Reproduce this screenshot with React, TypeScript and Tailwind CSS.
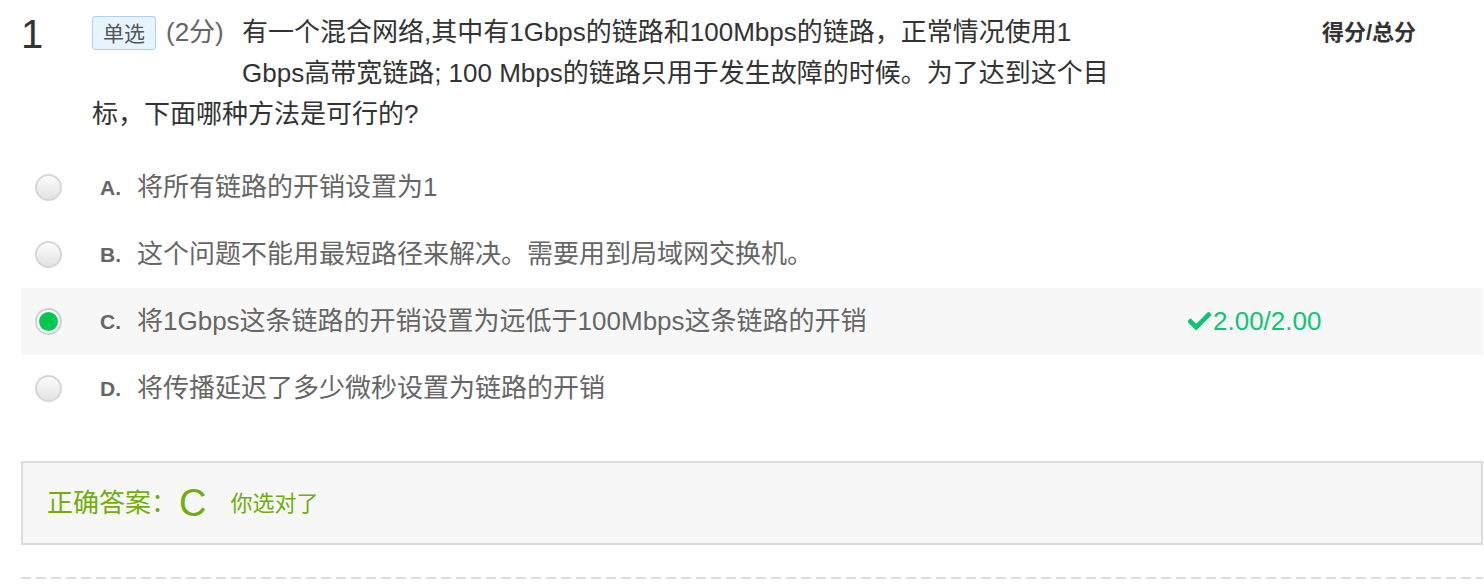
import React from 'react';

const options = [
  { key: 'A', text: '将所有链路的开销设置为1' },
  { key: 'B', text: '这个问题不能用最短路径来解决。需要用到局域网交换机。' },
  { key: 'C', text: '将1Gbps这条链路的开销设置为远低于100Mbps这条链路的开销', checked: true, score: '2.00/2.00' },
  { key: 'D', text: '将传播延迟了多少微秒设置为链路的开销' },
];

function Radio({ checked }: { checked?: boolean }) {
  if (checked) {
    return (
      <span className="flex h-[27px] w-[27px] items-center justify-center rounded-full border-2 border-[#d0d0d0] bg-white">
        <span className="h-[19px] w-[19px] rounded-full bg-[#00c853]" />
      </span>
    );
  }
  return (
    <span className="block h-[27px] w-[27px] rounded-full border-2 border-[#d6d6d6] bg-gradient-to-b from-[#fcfcfc] to-[#e2e2e2]" />
  );
}

export default function App() {
  return (
    <div className="min-h-[585px] bg-white pl-[21px] pr-px font-['Liberation_Sans','Noto_Sans_CJK_SC',sans-serif]">
      {/* question */}
      <div className="flex pt-3">
        <div className="w-[71px] text-[40px] leading-[44px] text-[#333]">1</div>
        <div className="w-[1040px] text-[26px] leading-[41px] text-[#333]">
          <div className="float-left flex h-[82px] w-[150px] items-start">
            <span className="mt-1 flex h-[34px] w-[64px] items-center justify-center rounded-[3px] border border-[#a8d3f3] bg-[#e6f4fd] text-[21px] leading-none text-[#555]">
              单选
            </span>
            <span className="ml-[10px] leading-[41px] text-[#666]">(2分)</span>
          </div>
          <span>
            有一个混合网络,其中有1Gbps的链路和100Mbps的链路，正常情况使用1 Gbps高带宽链路; 100 Mbps的链路只用于发生故障的时候。为了达到这个目标，下面哪种方法是可行的?
          </span>
        </div>
        <div className="ml-[190px] text-[22px] font-bold leading-[41px] text-[#333]">得分/总分</div>
      </div>

      {/* options */}
      <div className="mt-[19px]">
        {options.map((o) => (
          <div key={o.key} className={`flex h-[67px] items-center ${o.checked ? 'bg-[#f7f7f7]' : ''}`}>
            <div className="w-[79px] pl-[14px]">
              <Radio checked={o.checked} />
            </div>
            <div className="w-[37px] text-[21px] font-bold text-[#666]">{o.key}.</div>
            <div className="w-[1051px] text-[26px] text-[#666]">{o.text}</div>
            {o.score && (
              <div className="flex items-center text-[26px] text-[#10c475]">
                <svg viewBox="0 0 24 20" className="mr-[2px] h-[19px] w-[23px]">
                  <path d="M2.5 10 L8.5 16 L21.5 3" fill="none" stroke="#10c475" strokeWidth="5" strokeLinecap="square" />
                </svg>
                {o.score}
              </div>
            )}
          </div>
        ))}
      </div>

      {/* answer */}
      <div className="mt-[39px] flex h-[84px] items-center border-2 border-[#dcdcdc] bg-[#f7f7f7] pl-6 text-[#71ad0c]">
        <span className="text-[26px]">正确答案：</span>
        <span className="ml-[2px] text-[38px] leading-none">C</span>
        <span className="ml-[24px] text-[22px]">你选对了</span>
      </div>

      <div className="mt-[32px] h-[2px] bg-[repeating-linear-gradient(to_right,#dddddd_0_10px,transparent_10px_15px)]" />
    </div>
  );
}
